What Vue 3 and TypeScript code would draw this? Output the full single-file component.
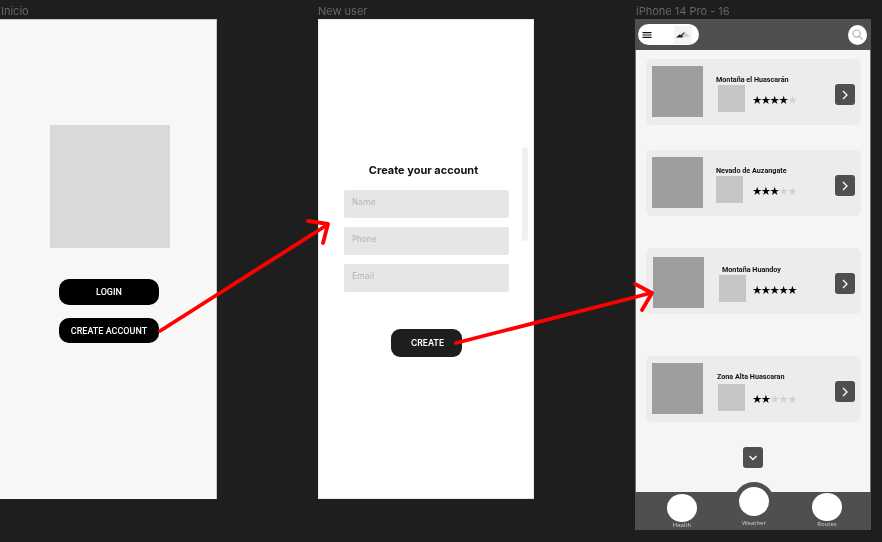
<script setup lang="ts">
interface Mountain {
  name: string;
  stars: number;
  gap: number; // space above the card
  photoX: number;
  photoY: number;
  nameX: number;
  nameY: number;
  thumbX: number;
  thumbY: number;
  starGap: number;
}

const mountains: Mountain[] = [
  { name: 'Montaña el Huascarán', stars: 4, gap: 9, photoX: 6, photoY: 7, nameX: 13, nameY: 16, thumbX: 2, thumbY: 0, starGap: 7 },
  { name: 'Nevado de Auzangate', stars: 3, gap: 25, photoX: 6, photoY: 7, nameX: 13, nameY: 16, thumbX: 0, thumbY: 0, starGap: 9 },
  { name: 'Montaña Huandoy', stars: 5, gap: 32, photoX: 7, photoY: 9, nameX: 18, nameY: 17, thumbX: -3, thumbY: 1, starGap: 6 },
  { name: 'Zona Alta Huascaran', stars: 2, gap: 42, photoX: 6, photoY: 7, nameX: 14, nameY: 16, thumbX: 1, thumbY: 3, starGap: 7 }
];

const tabs = [
  { label: 'Health', raised: false },
  { label: 'Weather', raised: true },
  { label: 'Routes', raised: false }
];

const range = [1, 2, 3, 4, 5];
</script>

<template>
  <div class="canvas">
    <!-- Inicio -->
    <span class="frame-label label-inicio">Inicio</span>
    <section class="frame frame-inicio">
      <div class="logo-block"></div>
      <button class="pill">LOGIN</button>
      <button class="pill pill--second">CREATE ACCOUNT</button>
    </section>

    <!-- New user -->
    <span class="frame-label label-new">New user</span>
    <section class="frame frame-new">
      <div class="scrollbar"></div>
      <h1 class="form-title">Create your account</h1>
      <div class="field">Name</div>
      <div class="field">Phone</div>
      <div class="field">Email</div>
      <button class="create">CREATE</button>
    </section>

    <!-- iPhone -->
    <span class="frame-label label-phone">iPhone 14 Pro - 16</span>
    <section class="frame frame-phone">
      <header class="topbar">
        <div class="brand">
          <svg class="burger" width="10" height="6" viewBox="0 0 10 6">
            <path d="M0.5 0.7h9M0.5 3h9M0.5 5.3h9" stroke="#111" stroke-width="1.2" />
          </svg>
          <div class="brand-logo">
            <svg width="14" height="7" viewBox="0 0 14 7">
              <path d="M0 6.5 L5 3.5 L9 0.5 L11 3 L14 6 L9 6 Z" fill="#cfcfcf" />
              <path d="M0 6.5 L3.5 3.5 L5 4 L8.5 0.8 L7.5 3.5 L6 4.5 L7 6.5 Z" fill="#222" />
            </svg>
          </div>
        </div>
        <div class="search">
          <svg width="11" height="11" viewBox="0 0 13 13" fill="none" stroke="#b0b0b0" stroke-width="1.4">
            <circle cx="5.4" cy="5.4" r="4.2" />
            <path d="M8.4 8.4 L12.4 12.4" />
          </svg>
        </div>
      </header>

      <main class="list">
        <article
          v-for="m in mountains"
          :key="m.name"
          class="card"
          :style="{ marginTop: m.gap + 'px' }"
        >
          <div class="photo" :style="{ marginLeft: m.photoX + 'px', marginTop: m.photoY + 'px' }"></div>
          <div class="info" :style="{ marginLeft: m.nameX + 'px', paddingTop: m.nameY + 'px' }">
            <div class="name">{{ m.name }}</div>
            <div class="meta" :style="{ marginLeft: m.thumbX + 'px', marginTop: m.thumbY + 'px' }">
              <div class="thumb"></div>
              <div class="stars" :style="{ marginLeft: m.starGap + 'px' }">
                <span v-for="i in range" :key="i" class="star" :class="{ 'star--on': i <= m.stars }">★</span>
              </div>
            </div>
          </div>
          <button class="square square--card">
            <svg width="8" height="10" viewBox="0 0 8 10" fill="none" stroke="#fff" stroke-width="1.3">
              <path d="M2 1 L6 5 L2 9" />
            </svg>
          </button>
        </article>

        <button class="square square--down">
          <svg width="10" height="8" viewBox="0 0 10 8" fill="none" stroke="#fff" stroke-width="1.3">
            <path d="M1.5 2 L5 5.5 L8.5 2" />
          </svg>
        </button>
      </main>

      <nav class="tabbar">
        <div v-for="t in tabs" :key="t.label" class="tab" :class="{ 'tab--raised': t.raised }">
          <div class="tab-dot"></div>
          <span class="tab-label">{{ t.label }}</span>
        </div>
      </nav>
    </section>

    <!-- flechas rojas del prototipo -->
    <svg class="arrows" width="882" height="542" viewBox="0 0 882 542" fill="none" stroke="#ff0000" stroke-width="3.8" stroke-linecap="round" stroke-linejoin="round">
      <path d="M160 331 L327 225" />
      <path d="M308 221 L328 224 L323 243" />
      <path d="M456 343 L651 293" />
      <path d="M635 284 L652 293 L642 310" />
    </svg>
  </div>
</template>

<style>
html, body {
  margin: 0;
  background: #1e1e1e;
}
</style>

<style scoped>
.canvas {
  position: relative;
  width: 882px;
  height: 542px;
  overflow: hidden;
  background: #1e1e1e;
  font-family: Inter, "Liberation Sans", sans-serif;
  filter: contrast(1); /* texto en gris, sin subpíxel */
}

/* Los marcos viven en un lienzo libre */
.frame-label {
  position: absolute;
  top: 4px;
  font-size: 11px;
  line-height: 14px;
  color: #666;
}
.label-inicio { left: 1px; }
.label-new { left: 318px; }
.label-phone { left: 636px; }

.frame {
  position: absolute;
  top: 19px;
  box-sizing: border-box;
  display: flex;
  flex-direction: column;
}

.frame-inicio {
  left: 0;
  width: 217px;
  height: 480px;
  background: #f7f7f7;
  box-shadow: inset -1px 1px 0 0 #c8c8c8;
  align-items: center;
  padding: 106px 0 0 3px;
}

.logo-block {
  width: 120px;
  height: 123px;
  margin-bottom: 31px;
  background: #d9d9d9;
}

.pill {
  width: 100px;
  height: 26px;
  margin-left: -2px;
  padding: 0;
  border: 0;
  border-radius: 10px;
  background: #000;
  color: #fff;
  font-family: Roboto, sans-serif;
  font-weight: 500;
  font-size: 9px;
}
.pill--second {
  margin-top: 13px;
  height: 25px;
}

.frame-new {
  left: 318px;
  width: 216px;
  height: 480px;
  background: #fff;
  box-shadow: inset 0 0 0 1px #e8e8e8;
  padding: 143px 25px 0 26px;
}

.scrollbar {
  position: absolute;
  top: 128px;
  left: 204px;
  width: 6px;
  height: 94px;
  border-radius: 3px;
  background: #f0eff1;
}

.form-title {
  margin: 0 0 10px;
  font-size: 11px;
  line-height: 17px;
  padding-bottom: 1px;
  font-weight: 700;
  color: #111;
  text-align: center;
  transform: translateX(-3px);
}

.field {
  height: 28px;
  margin-bottom: 9px;
  padding-left: 8px;
  border-radius: 2px;
  background: #e6e6e6;
  color: #b3b3b3;
  font-family: "DejaVu Sans", sans-serif;
  font-size: 8px;
  line-height: 26px;
}

.create {
  width: 71px;
  height: 28px;
  margin: 28px 0 0 47px;
  padding: 0 0 0 2px;
  border: 0;
  border-radius: 9px;
  background: #1e1e1e;
  color: #fff;
  font-family: Inter, sans-serif;
  font-weight: 600;
  font-size: 8.5px;
}

.frame-phone {
  left: 635px;
  width: 236px;
  height: 511px;
  background: #f5f5f5;
  box-shadow: inset 0 0 0 1px #707070;
}

.topbar {
  display: flex;
  align-items: center;
  justify-content: space-between;
  flex: none;
  height: 31px;
  padding: 0 4px 0 3px;
  box-sizing: border-box;
  background: #4f4f4f;
}

.brand {
  display: flex;
  align-items: center;
  justify-content: space-between;
  box-sizing: border-box;
  width: 61px;
  height: 21px;
  padding: 0 6px 0 4px;
  border-radius: 11px;
  background: #fff;
}

.brand-logo {
  display: flex;
  align-items: center;
  justify-content: center;
  width: 18px;
  height: 18px;
  margin-right: 1px;
  background: #f4f4f4;
}

.search {
  display: flex;
  align-items: center;
  justify-content: center;
  width: 19px;
  height: 20px;
  border-radius: 50%;
  background: #fff;
}

.list {
  flex: 1;
  display: flex;
  flex-direction: column;
  padding: 0 10px 0 11px;
}

.card {
  display: flex;
  flex: none;
  position: relative;
  height: 66px;
  border-radius: 6px;
  background: #ececec;
}

.photo {
  flex: none;
  width: 51px;
  height: 51px;
  background: #9e9e9e;
}

.info {
  flex: 1;
}

.name {
  margin-bottom: 1px;
  font-family: Roboto, sans-serif;
  font-size: 7.2px;
  font-weight: 700;
  line-height: 9px;
  color: #111;
  white-space: nowrap;
}

.meta {
  display: flex;
  align-items: center;
}

.thumb {
  flex: none;
  width: 27px;
  height: 27px;
  background: #c6c6c6;
}

.stars {
  display: flex;
  margin: 2px 0 0 -1px;
}

.star {
  width: 8.8px;
  font-family: "DejaVu Sans", sans-serif;
  font-size: 11.5px;
  line-height: 12px;
  text-align: center;
  color: #d2d2d2;
}
.star--on {
  color: #000;
}

.square {
  display: flex;
  align-items: center;
  justify-content: center;
  width: 20px;
  height: 21px;
  padding: 0;
  border: 0;
  border-radius: 3px;
  background: #4f4f4f;
}
.square--card {
  position: absolute;
  top: 25px;
  right: 6px;
}
.square--down {
  margin: 25px 0 0 97px;
}

.tabbar {
  display: flex;
  flex: none;
  height: 38px;
  background: #4f4f4f;
  position: relative;
}

.tab {
  position: absolute;
  top: 2px;
  width: 30px;
  display: flex;
  flex-direction: column;
  align-items: center;
}
.tab:nth-child(1) { left: 32px; }
.tab:nth-child(2) { left: 104px; top: -5px; }
.tab:nth-child(3) { left: 177px; top: 1px; }

.tab-dot {
  flex: none;
  width: 30px;
  height: 28px;
  border-radius: 50%;
  background: #fff;
}
.tab--raised .tab-dot {
  height: 29px;
  box-shadow: 0 0 0 5px #4f4f4f;
}
.tab-label {
  font-family: "Open Sans", sans-serif;
  font-size: 6px;
  line-height: 8px;
  color: #d0d0d0;
  margin-top: -1px;
  white-space: nowrap;
}
.tab--raised .tab-label {
  margin-top: 3px;
}

.arrows {
  position: absolute;
  inset: 0;
  pointer-events: none;
}
</style>
